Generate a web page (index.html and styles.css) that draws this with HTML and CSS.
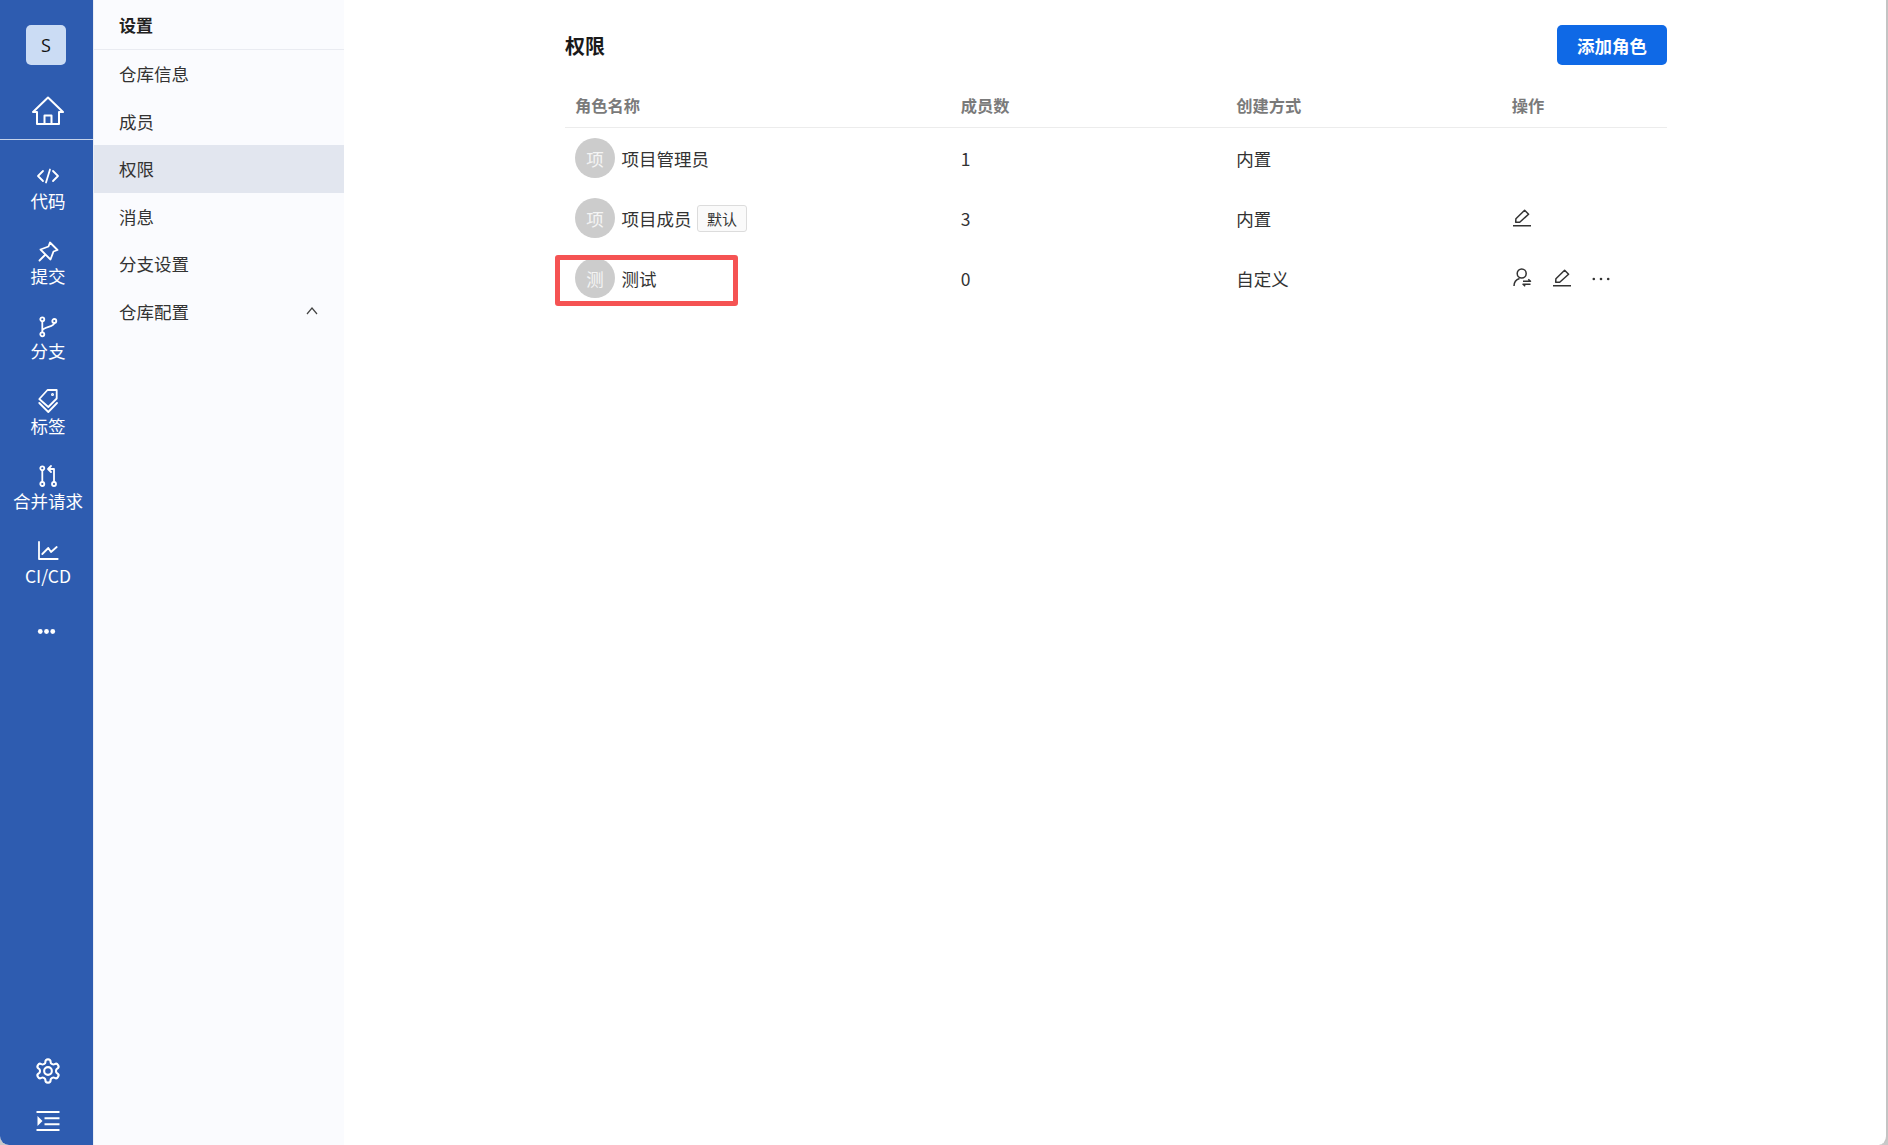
FILE: index.html
```html
<!DOCTYPE html>
<html lang="zh-CN">
<head>
    <meta charset="UTF-8">
    <meta name="viewport" content="width=device-width, initial-scale=1.0">
    <title>权限</title>
    <link rel="stylesheet" href="styles.css">
</head>
<body>
<div class="app">

    <nav class="rail">
        <div class="repo-avatar">S</div>
        <a class="rail-home">
            <svg class="icon-home" viewBox="0 0 32 32"><path d="M16 2.500 31 17h-4v12H5V17H1z"/><path d="M12.500 29v-8.500h7V29"/></svg>
        </a>
        <a class="rail-item">
            <svg viewBox="0 0 24 24"><path d="M7 7 2 12l5 5M17 7l5 5-5 5M14 5.500l-4 13"/></svg>
            <span>代码</span>
        </a>
        <a class="rail-item">
            <svg viewBox="0 0 24 24"><path d="M14 3.500 21.500 11l-4 1.500-3 8-10-10 8-3zM9 16l-5.500 5.500"/></svg>
            <span>提交</span>
        </a>
        <a class="rail-item">
            <svg viewBox="0 0 24 24"><circle cx="6.300" cy="5.300" r="2"/><circle cx="18.300" cy="7" r="2"/><circle cx="6.300" cy="20.300" r="2"/><path d="M6.300 7.300v11M18.300 9c0 4-10.500 3.500-12 7.500"/></svg>
            <span>分支</span>
        </a>
        <a class="rail-item">
            <svg viewBox="0 0 24 24"><path d="M20.700 1v8.500L12.300 18l-9-8 8.200-9z"/><path d="M3.300 14l9 9 8.700-9"/><circle cx="16.500" cy="5.500" r=".6"/></svg>
            <span>标签</span>
        </a>
        <a class="rail-item">
            <svg viewBox="0 0 24 24"><circle cx="6.300" cy="4.300" r="2"/><circle cx="6.300" cy="20" r="2"/><circle cx="18" cy="20" r="2"/><path d="M6.300 6.300V18M18 18V5h-5.500M15 2l-3 3 3 3"/></svg>
            <span>合并请求</span>
        </a>
        <a class="rail-item">
            <svg viewBox="0 0 24 24"><path d="M3 3v17h18.700M6.300 15l6-6 2.700 4 5.700-5"/></svg>
            <span>CI/CD</span>
        </a>
        <a class="rail-more">
            <svg viewBox="0 0 24 24"><circle cx="5.500" cy="12" r="2.500"/><circle cx="12" cy="12" r="2.500"/><circle cx="18.500" cy="12" r="2.500"/></svg>
        </a>
        <div class="rail-bottom">
            <a class="rail-tool">
                <svg class="icon-gear" viewBox="0 0 24 24"><path d="M12.220 2h-.44a2 2 0 0 0-2 2v.18a2 2 0 0 1-1 1.730l-.43.25a2 2 0 0 1-2 0l-.15-.08a2 2 0 0 0-2.730.73l-.22.38a2 2 0 0 0 .73 2.730l.15.1a2 2 0 0 1 1 1.720v.51a2 2 0 0 1-1 1.740l-.15.09a2 2 0 0 0-.73 2.730l.22.38a2 2 0 0 0 2.730.73l.15-.08a2 2 0 0 1 2 0l.43.25a2 2 0 0 1 1 1.730V20a2 2 0 0 0 2 2h.44a2 2 0 0 0 2-2v-.18a2 2 0 0 1 1-1.730l.43-.25a2 2 0 0 1 2 0l.15.08a2 2 0 0 0 2.730-.73l.22-.39a2 2 0 0 0-.73-2.730l-.15-.08a2 2 0 0 1-1-1.740v-.5a2 2 0 0 1 1-1.740l.15-.09a2 2 0 0 0 .73-2.730l-.22-.38a2 2 0 0 0-2.730-.73l-.15.08a2 2 0 0 1-2 0l-.43-.25a2 2 0 0 1-1-1.730V4a2 2 0 0 0-2-2z"/><circle cx="12" cy="12" r="3.300"/></svg>
            </a>
            <a class="rail-tool">
                <svg class="icon-collapse" viewBox="0 0 24 20"><path d="M0.500 1h23M8.500 7.300h15M8.500 13.300h15M0.500 19h23"/><path class="fill" d="M1.500 5l5 5-5 5z"/></svg>
            </a>
        </div>
    </nav>

    <aside class="sidebar">
        <div class="sidebar-title">设置</div>
        <a class="side-item">仓库信息</a>
        <a class="side-item">成员</a>
        <a class="side-item active">权限</a>
        <a class="side-item">消息</a>
        <a class="side-item">分支设置</a>
        <a class="side-item">
            仓库配置
            <svg class="chevron" viewBox="0 0 12 8"><path d="M1 7l5-6 5 6"/></svg>
        </a>
    </aside>

    <main class="main">
        <div class="page-head">
            <h1>权限</h1>
            <button type="button" class="btn-primary">添加角色</button>
        </div>

        <table class="role-table">
            <thead>
                <tr>
                    <th class="col-name">角色名称</th>
                    <th class="col-count">成员数</th>
                    <th class="col-type">创建方式</th>
                    <th class="col-actions">操作</th>
                </tr>
            </thead>
            <tbody>
                <tr>
                    <td><div class="role"><span class="avatar">项</span>项目管理员</div></td>
                    <td>1</td>
                    <td>内置</td>
                    <td></td>
                </tr>
                <tr>
                    <td><div class="role"><span class="avatar">项</span>项目成员<span class="tag">默认</span></div></td>
                    <td>3</td>
                    <td>内置</td>
                    <td>
                        <div class="actions">
                            <svg viewBox="0 0 20 20"><path d="M3.700 14.300l.2-3.600 8.700-8.500 4 4-8.900 8.100zM1 17.700h18"/></svg>
                        </div>
                    </td>
                </tr>
                <tr>
                    <td class="marked">
                        <div class="role"><span class="avatar">测</span>测试</div>
                        <div class="highlight"></div>
                    </td>
                    <td>0</td>
                    <td>自定义</td>
                    <td>
                        <div class="actions">
                            <svg viewBox="0 0 20 20"><circle cx="9.700" cy="5.500" r="4.500"/><path d="M2 18c0-4 2.500-6.500 5.500-7.500M11 13.300h7.500l-2.200-2M18.500 16.300H11l2.200 2"/></svg>
                            <svg viewBox="0 0 20 20"><path d="M3.700 14.300l.2-3.600 8.700-8.500 4 4-8.900 8.100zM1 17.700h18"/></svg>
                            <svg viewBox="0 0 20 20"><circle class="fill" cx="1.800" cy="11" r="1.300"/><circle class="fill" cx="9" cy="11" r="1.300"/><circle class="fill" cx="16.200" cy="11" r="1.300"/></svg>
                        </div>
                    </td>
                </tr>
            </tbody>
        </table>
    </main>

</div>
</body>
</html>
```

FILE: styles.css
```css
html, body {
    margin: 0;
    padding: 0;
    height: 100%;
}
body {
    font-family: "Noto Sans CJK SC", "Noto Sans", sans-serif;
    font-size: 17.5px;
    color: #333;
    background-color: #c9c9c9;
}
.app {
    display: flex;
    height: 100vh;
    box-sizing: border-box;
    border-right: 2px solid #c4c4c4;
    border-radius: 0 0 9px 9px;
    overflow: hidden;
    background-color: #fff;
}

/* left blue rail */
.rail {
    width: 93px;
    flex-shrink: 0;
    display: flex;
    flex-direction: column;
    background-color: #2e5cb0;
    color: #fff;
}
.rail svg {
    fill: none;
    stroke: #fff;
    stroke-width: 1.8;
    stroke-linejoin: round;
    stroke-linecap: round;
}
.repo-avatar {
    width: 40px;
    height: 40px;
    margin: 25px 0 0 26px;
    display: flex;
    align-items: center;
    justify-content: center;
    border-radius: 5px;
    background-color: #cbdcf4;
    color: #111;
    font-family: "Open Sans", sans-serif;
    font-size: 18px;
    line-height: 1;
}
.rail-home {
    height: 44px;
    margin-top: 30px;
    padding-left: 3px;
    display: flex;
    justify-content: center;
    border-bottom: 1px solid #c4d2ea;
}
.icon-home {
    width: 32px;
    height: 32px;
    stroke-width: 2 !important;
    stroke-linecap: butt !important;
}
.rail-item {
    height: 75px;
    padding-left: 3px;
    display: flex;
    flex-direction: column;
    align-items: center;
}
.rail-home + .rail-item {
    margin-top: 11px;
}
.rail-item svg {
    width: 24px;
    height: 24px;
    margin-top: 12.5px;
}
.rail-item span {
    line-height: 25px;
    white-space: nowrap;
}
.rail-more {
    display: flex;
    margin: 19px 0 0 35px;
}
.rail-more svg {
    width: 23px;
    height: 23px;
    fill: #fff;
    stroke: none;
}
.rail-bottom {
    margin-top: auto;
}
.rail-tool {
    height: 50px;
    padding-left: 2px;
    display: flex;
    align-items: center;
    justify-content: center;
    position: relative;
    top: 1px;
}
.icon-gear {
    width: 28px;
    height: 28px;
}
.icon-collapse {
    width: 24px;
    height: 20px;
    stroke-width: 2 !important;
    stroke-linecap: butt !important;
}
.icon-collapse .fill {
    fill: #fff;
    stroke: none;
}

/* settings menu */
.sidebar {
    width: 250px;
    flex-shrink: 0;
    border-left: 1px solid #e9edf5;
    background-color: #fafbfe;
}
.sidebar-title {
    height: 49px;
    padding-left: 25px;
    line-height: 50px;
    font-weight: 700;
    font-size: 17px;
    color: #222;
    border-bottom: 1px solid #e9ebf1;
}
.side-item {
    height: 47.5px;
    padding: 0 26px 0 25px;
    display: flex;
    align-items: center;
    justify-content: space-between;
    color: #333;
}
.side-item.active {
    background-color: #e2e6ef;
}
.chevron {
    width: 12px;
    height: 8px;
    fill: none;
    stroke: #444;
    stroke-width: 1.2;
}

/* main content */
.main {
    flex: 1;
    padding: 25px 219px 0 221px;
}
.page-head {
    height: 40px;
    margin-bottom: 20px;
    display: flex;
    align-items: center;
    justify-content: space-between;
}
.page-head h1 {
    margin: 0;
    font-size: 20px;
    font-weight: 700;
    color: #1a1a1a;
}
.btn-primary {
    width: 110px;
    height: 40px;
    padding: 0;
    border: none;
    border-radius: 5px;
    background-color: #0f69e6;
    color: #fff;
    font-family: inherit;
    font-size: 17.5px;
    font-weight: 700;
    cursor: pointer;
}
.role-table {
    width: 100%;
    table-layout: fixed;
    border-collapse: separate;
    border-spacing: 0;
}
.role-table th {
    box-sizing: border-box;
    height: 43px;
    padding: 0 10px 3px;
    text-align: left;
    font-size: 16.25px;
    font-weight: 700;
    color: #7a7a7a;
    border-bottom: 1px solid #ececec;
}
.col-name { width: 35%; }
.col-count { width: 25%; }
.col-type { width: 25%; }
.col-actions { width: 15%; }
.role-table td {
    box-sizing: border-box;
    height: 60px;
    padding: 0 10px;
}
.role {
    display: flex;
    align-items: center;
}
.avatar {
    width: 40px;
    height: 40px;
    margin-right: 6.5px;
    display: flex;
    align-items: center;
    justify-content: center;
    border-radius: 50%;
    background-color: #ccc;
    color: #f4f4f4;
    font-size: 17.5px;
}
.tag {
    margin-left: 5.5px;
    width: 50px;
    height: 27px;
    box-sizing: border-box;
    display: flex;
    align-items: center;
    justify-content: center;
    border: 1px solid #dcdcdc;
    border-radius: 3px;
    background-color: #fafafa;
    font-size: 15px;
}
.actions {
    display: flex;
    gap: 20px;
}
.actions svg {
    width: 20px;
    height: 20px;
    fill: none;
    stroke: #333;
    stroke-width: 1.5;
    stroke-linejoin: round;
}
.actions svg .fill {
    fill: #333;
    stroke: none;
}
.marked {
    position: relative;
}
.highlight {
    position: absolute;
    left: -10px;
    top: 7px;
    width: 183px;
    height: 51px;
    box-sizing: border-box;
    border: 5px solid #f55353;
    border-radius: 3px;
}
```
